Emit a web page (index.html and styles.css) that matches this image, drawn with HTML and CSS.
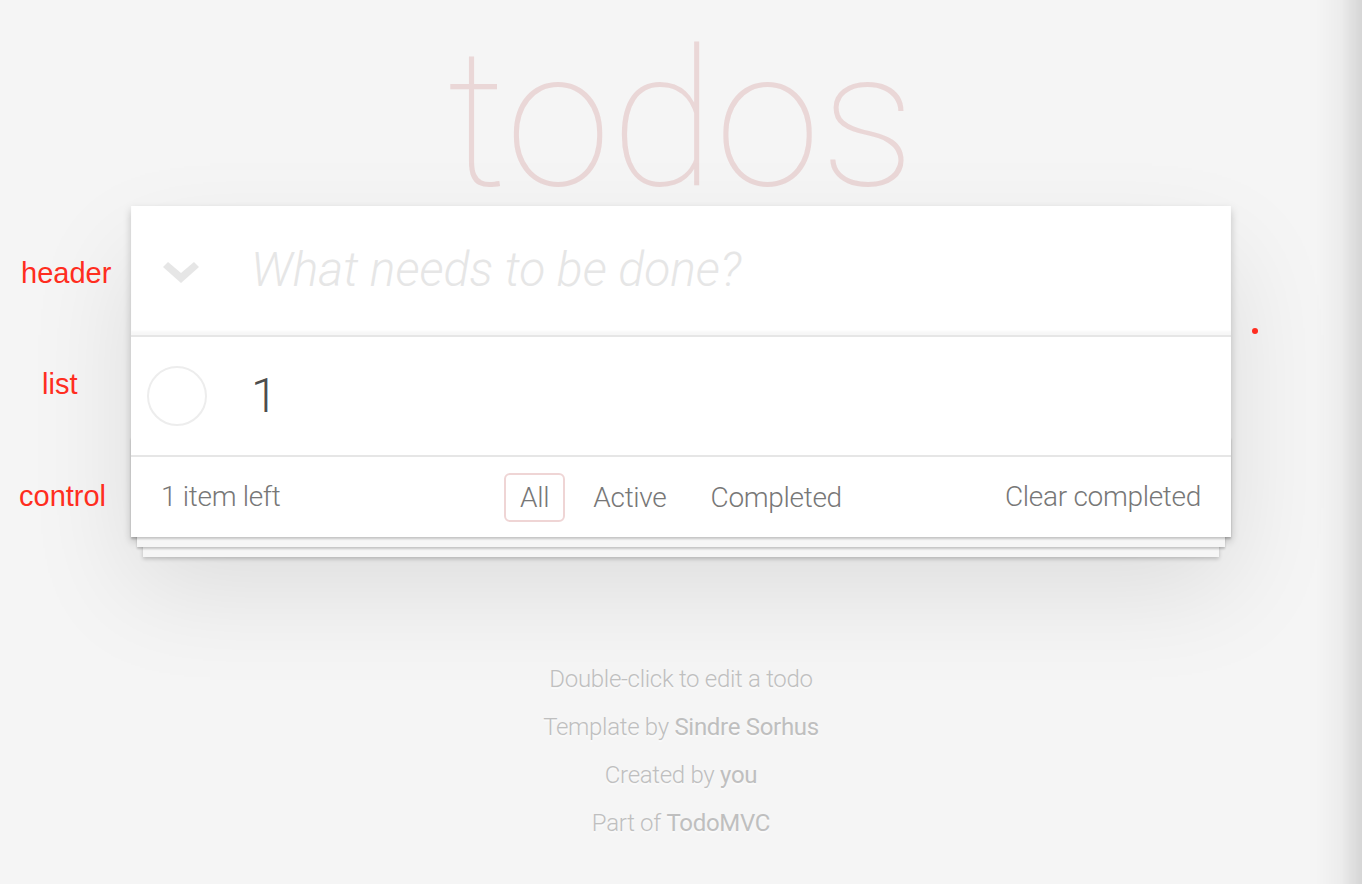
FILE: index.html
```html
<!DOCTYPE html>
<html lang="en">
<head>
<meta charset="utf-8">
<title>todos</title>
<link rel="stylesheet" href="styles.css">
</head>
<body>
<div class="edge-shade"></div>
<span class="note note-header">header</span>
<span class="note note-list">list</span>
<span class="note note-control">control</span>
<span class="red-dot"></span>

<div class="page">
  <h1 class="title">todos</h1>
  <section class="todoapp">
    <header class="header">
      <span class="toggle-all">
        <svg width="36" height="22" viewBox="0 0 36 22"><polygon points="0,5 5,0 18,11 31,0 36,5 18,21" fill="#e6e6e6"/></svg>
      </span>
      <span class="placeholder">What needs to be done?</span>
    </header>
    <ul class="todo-list">
      <li class="todo">
        <span class="toggle"></span>
        <span class="todo-label">1</span>
      </li>
    </ul>
    <footer class="footer">
      <span class="todo-count">1 item left</span>
      <ul class="filters">
        <li><a class="filter selected">All</a></li>
        <li><a class="filter">Active</a></li>
        <li><a class="filter">Completed</a></li>
      </ul>
      <span class="clear-completed">Clear completed</span>
    </footer>
  </section>
  <footer class="info">
    <p>Double-click to edit a todo</p>
    <p>Template by <a>Sindre Sorhus</a></p>
    <p>Created by <a>you</a></p>
    <p>Part of <a>TodoMVC</a></p>
  </footer>
</div>
</body>
</html>
```

FILE: styles.css
```css
html, body {
  margin: 0;
  padding: 0;
}

body {
  background: #f5f5f5;
  font-family: "Roboto", "Inter", "Liberation Sans", sans-serif;
  font-weight: 300;
  font-size: 28px;
  line-height: 1.4;
  color: #4d4d4d;
  min-height: 884px;
  position: relative;
}

.edge-shade {
  position: fixed;
  top: 0;
  right: 0;
  bottom: 0;
  width: 46px;
  background: linear-gradient(to right, rgba(0,0,0,0) 0%, rgba(0,0,0,0.035) 55%, rgba(0,0,0,0.13) 100%);
  pointer-events: none;
}

.note {
  position: absolute;
  color: #ff2d20;
  font-family: "Liberation Sans", "Helvetica", sans-serif;
  font-weight: 400;
  font-size: 29px;
  line-height: 32px;
}
.note-header { left: 21px; top: 257px; }
.note-list { left: 42px; top: 368px; }
.note-control { left: 19px; top: 480px; }

.red-dot {
  position: absolute;
  left: 1252px;
  top: 328px;
  width: 6px;
  height: 6px;
  border-radius: 50%;
  background: #ff2d20;
}

.page {
  width: 1100px;
  margin: 0 auto;
}

.title {
  margin: 0;
  padding-top: 35px;
  font-size: 191px;
  line-height: 171px;
  font-weight: 100;
  text-align: center;
  color: rgba(175, 47, 47, 0.15);
}

.todoapp {
  background: #fff;
  box-shadow: 0 4px 8px 0 rgba(0,0,0,0.2), 0 50px 100px 0 rgba(0,0,0,0.1);
}

.header {
  display: flex;
  align-items: center;
  height: 129px;
  box-shadow: inset 0 -4px 2px rgba(0,0,0,0.03);
}

.toggle-all {
  width: 100px;
  display: flex;
  justify-content: center;
  padding-top: 4px;
}

.placeholder {
  padding-left: 20px;
  font-size: 48px;
  font-style: italic;
  font-weight: 300;
  color: #e6e6e6;
  padding-bottom: 2px;
}

.todo-list {
  list-style: none;
  margin: 0;
  padding: 0;
  border-top: 2px solid #e6e6e6;
}

.todo {
  display: flex;
  align-items: center;
  height: 118px;
}

.toggle {
  width: 56px;
  height: 56px;
  margin-left: 16px;
  border: 2px solid #ededed;
  border-radius: 50%;
}

.todo-label {
  padding-left: 44px;
  font-size: 48px;
  line-height: 1.2;
  font-weight: 300;
  color: #4d4d4d;
}

.footer {
  position: relative;
  display: grid;
  grid-template-columns: 1fr auto 1fr;
  grid-template-rows: 80px;
  align-items: center;
  height: 80px;
  padding: 0 30px;
  border-top: 2px solid #e6e6e6;
  color: #777;
  font-size: 28px;
  letter-spacing: -0.3px;
}

.footer::before {
  content: "";
  position: absolute;
  left: 0;
  right: 0;
  bottom: 0;
  height: 100px;
  box-shadow:
    0 2px 2px rgba(0,0,0,0.2),
    0 16px 0 -6px #f6f6f6,
    0 18px 2px -6px rgba(0,0,0,0.2),
    0 32px 0 -12px #f6f6f6,
    0 34px 4px -12px rgba(0,0,0,0.2);
  pointer-events: none;
}

.todo-count {
  justify-self: start;
}

.filters {
  display: flex;
  list-style: none;
  margin: 0;
  padding: 0;
}

.filter {
  display: block;
  margin: 0 6px;
  padding: 3px 14px;
  border: 2px solid transparent;
  border-radius: 6px;
  line-height: 39px;
  color: #777;
}

.filter.selected {
  border-color: rgba(175, 47, 47, 0.2);
}

.clear-completed {
  justify-self: end;
}

.info {
  margin-top: 130px;
  text-align: center;
  color: #bfbfbf;
  font-size: 24px;
  font-weight: 300;
  letter-spacing: -0.3px;
  text-shadow: 0 2px 0 rgba(255,255,255,0.5);
}

.info p {
  line-height: 1;
  margin: 24px 0;
}

.info a {
  color: inherit;
  font-weight: 400;
  text-decoration: none;
}
```
